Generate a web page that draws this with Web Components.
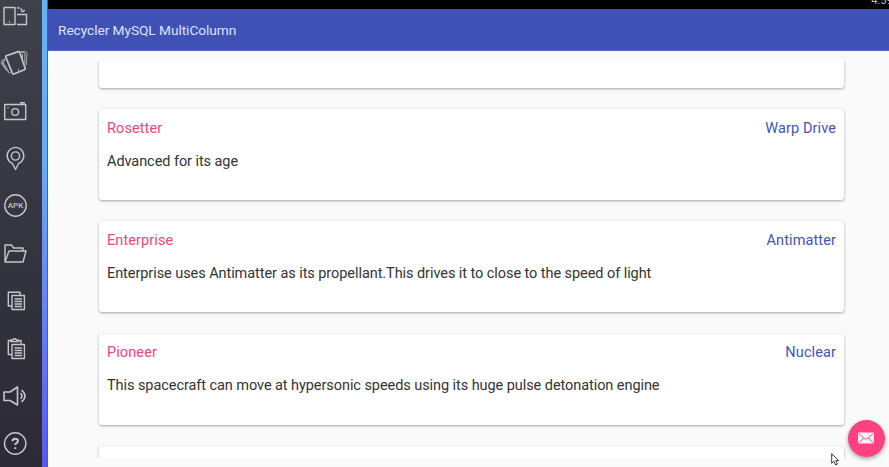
<!DOCTYPE html>
<html lang="en"><head><meta charset="utf-8"><title>Recycler MySQL MultiColumn</title>
<style>html,body{margin:0;height:100%;overflow:hidden}body{font-family:Roboto,"Liberation Sans",sans-serif}</style></head>
<body><emulator-window></emulator-window>
<script>
class Base extends HTMLElement{
  constructor(){super();this.attachShadow({mode:'open'});}
  connectedCallback(){this.shadowRoot.innerHTML=this.view();}
}
const icons={
rotate:'<path d="M4 7.500h11v17H4zM17 14.500h9.500v10H17M9 21.800h1"/><path d="M17 7.800q5 0 6 4M21 10.500l2.200 1.800 1.300-2.600" stroke-dasharray="2.500 1"/>',
shake:'<g transform="translate(0 1)"><path stroke-width="1.700" d="M6.400 6.800l11.800-4.200q1-.3 1.400.7l5.600 16q.3 1-.7 1.400L13.800 25q-1 .3-1.400-.7L5.800 8q-.3-.9.600-1.200z"/><path stroke-width=".8" d="M5 10l-3.200 1.600q-.8.500-.3 1.500L8 22.700q.8 1 2.600 1.300M4.700 12.500L3 13.500l6 10M20.500 3.300l3.300.2q1 .2 1 1.300v10M22.500 5v5M6 9.500l-4.700 5 5 6.500M20.500 2.400l5 .4q1.300.2 1.500 1.500l-.8 12"/><path d="M18 21h1"/></g>',
camera:'<g transform="translate(0 1)"><path d="M4.700 8.500h21v15h-21zM20 6.800h5"/><circle cx="15.200" cy="16" r="3.400"/><path d="M7.500 12h1"/></g>',
pin:'<g transform="translate(0 -1)"><path d="M15.500 27.500l-3.200-6.200a8.300 8.300 0 1 1 6.400 0z"/><circle cx="15.500" cy="14" r="4.100"/></g>',
apk:'<circle cx="15.500" cy="15.500" r="10.700"/><text x="15.500" y="18.300" text-anchor="middle" font-size="8" font-weight="500" fill="currentColor" stroke="none">APK</text>',
folder:'<path d="M5 24V7h6.500l2 3h9.500v3M5 24h18l3-11H9z"/>',
copy:'<g transform="translate(0 1)"><path d="M12 20H8.300V6.300H20v3M12 9.500h12.400v14H12zM14.500 13h7.500M14.500 15.500h7.500M14.500 18h7.500M14.500 20.500h7.500"/></g>',
paste:'<g transform="translate(0 1)"><path d="M12 20.500H8.300v-14H11M18 6.500h3v3M12 10.500h12.400v14H12zM14.500 14h7.500M14.500 16.500h7.500M14.500 19h7.500M14.500 21.500h7.500"/><path d="M10.500 7.500q0-1.700 2-1.700 2-2 4 0 2 0 2 1.700z"/></g>',
sound:'<path d="M4 12h6l7.500-5v18L10 20.500H4zM20.500 13.200q3 2.800 0 5.500M21.500 10q7 6 0 11.800" stroke-width="1.600"/>',
help:'<circle cx="15.200" cy="15.500" r="10.700"/><path stroke-width="2" d="M12.500 13.200q0-2.500 2.700-2.500t2.700 2.300q0 1.300-1.500 2.100-1.200.7-1.200 2M15.200 19.200v1.700"/>'};
customElements.define('rail-icon',class extends Base{view(){return `<style>:host{display:block;height:30px;color:#c5c5cb}svg{display:block;font-family:Roboto,sans-serif}</style><svg width="32" height="30" fill="none" stroke="currentColor" stroke-width="1.400" stroke-linejoin="round">${icons[this.getAttribute('name')]}</svg>`}});
customElements.define('tool-rail',class extends Base{view(){return `<style>:host{display:flex;flex:0 0 42px;background:linear-gradient(#41414c,#353540 50%,#2b2a35)}div{display:flex;flex-direction:column;gap:17.550px}</style><div>${Object.keys(icons).map(n=>`<rail-icon name="${n}"></rail-icon>`).join('')}</div>`}});
customElements.define('status-bar',class extends Base{view(){return `<style>:host{display:flex;justify-content:flex-end;align-items:flex-end;height:9px;background:#000;overflow:hidden;flex:none}span{font-size:11px;line-height:14px;color:#b9b9b9;margin:0 -3.500px 1px 0;height:14px;white-space:nowrap}</style><span>4:59</span>`}});
customElements.define('app-bar',class extends Base{view(){return `<style>:host{display:flex;align-items:center;height:42px;flex:none;box-sizing:border-box;padding:1px 0 0 10px;background:#3f51b5;border-bottom:1px solid #5a63c6;color:#dde3f6;font-size:13.700px;letter-spacing:-.05px}</style><slot></slot>`}});
customElements.define('craft-card',class extends Base{view(){return `<style>:host{display:block;height:91px;box-sizing:border-box;flex:none;background:#fff;border-radius:3px;box-shadow:0 1px 3px rgba(0,0,0,.3),0 1px 1px rgba(0,0,0,.06);padding:10.500px 8px 0;font-size:14.500px;line-height:18px;color:#333}
header{display:flex;justify-content:space-between;color:#4453b8;letter-spacing:.1px}.n{color:#f04484}p{margin:15px 0 0;white-space:nowrap;letter-spacing:-.066px}</style><header><span class="n"><slot name="name"></slot></span><span><slot name="fuel"></slot></span></header><p><slot></slot></p>`}});
customElements.define('card-list',class extends Base{view(){return `<style>:host{display:flex;flex-direction:column;justify-content:flex-start;gap:21.200px;margin-top:10px;height:397px;padding:0 45px 0 51px;overflow:hidden}::slotted(:first-child){margin-top:-64px}</style><slot></slot>`}});
customElements.define('mail-fab',class extends Base{view(){return `<style>:host{position:absolute;left:847.500px;top:419.500px;width:37px;height:37px;border-radius:50%;background:#ff4081;box-shadow:0 2px 4px rgba(0,0,0,.35);display:grid;place-items:center}</style><svg width="18" height="14"><rect x="1" y="1.500" width="16" height="11" rx=".8" fill="#f5f1f3"/><path d="M1.500 2.500L9 8.500l7.500-6M1.500 12l5.300-5M16.500 12l-5.300-5" fill="none" stroke="#e08fac" stroke-width="1.200"/></svg>`}});
customElements.define('mouse-pointer',class extends Base{view(){return `<style>:host{position:absolute;left:831px;top:453px}svg{display:block}</style><svg width="10" height="13"><path d="M.7.700v9.500l2.200-2 1.700 3.700 1.800-.8-1.700-3.500h3z" fill="#fff" stroke="#222" stroke-width=".9"/></svg>`}});
customElements.define('emulator-window',class extends Base{view(){return `<style>:host{display:flex;width:889px;height:467px;background:#fafafa;overflow:hidden}.strip{flex:0 0 5px;background:linear-gradient(#64b4f5,#68a9fa 35%,#6484f8 65%,#5858ef);border-right:1px solid #555f78}main{flex:1;display:flex;flex-direction:column;min-width:0}</style>
<tool-rail></tool-rail><div class="strip"></div><main><status-bar></status-bar><app-bar>Recycler MySQL MultiColumn</app-bar><card-list>
<craft-card></craft-card>
<craft-card><span slot="name">Rosetter</span><span slot="fuel">Warp Drive</span>Advanced for its age</craft-card>
<craft-card><span slot="name">Enterprise</span><span slot="fuel">Antimatter</span>Enterprise uses Antimatter as its propellant.This drives it to close to the speed of light</craft-card>
<craft-card><span slot="name">Pioneer</span><span slot="fuel">Nuclear</span>This spacecraft can move at hypersonic speeds using its huge pulse detonation engine</craft-card>
<craft-card></craft-card></card-list></main><mail-fab></mail-fab><mouse-pointer></mouse-pointer>`}});
</script></body></html>
